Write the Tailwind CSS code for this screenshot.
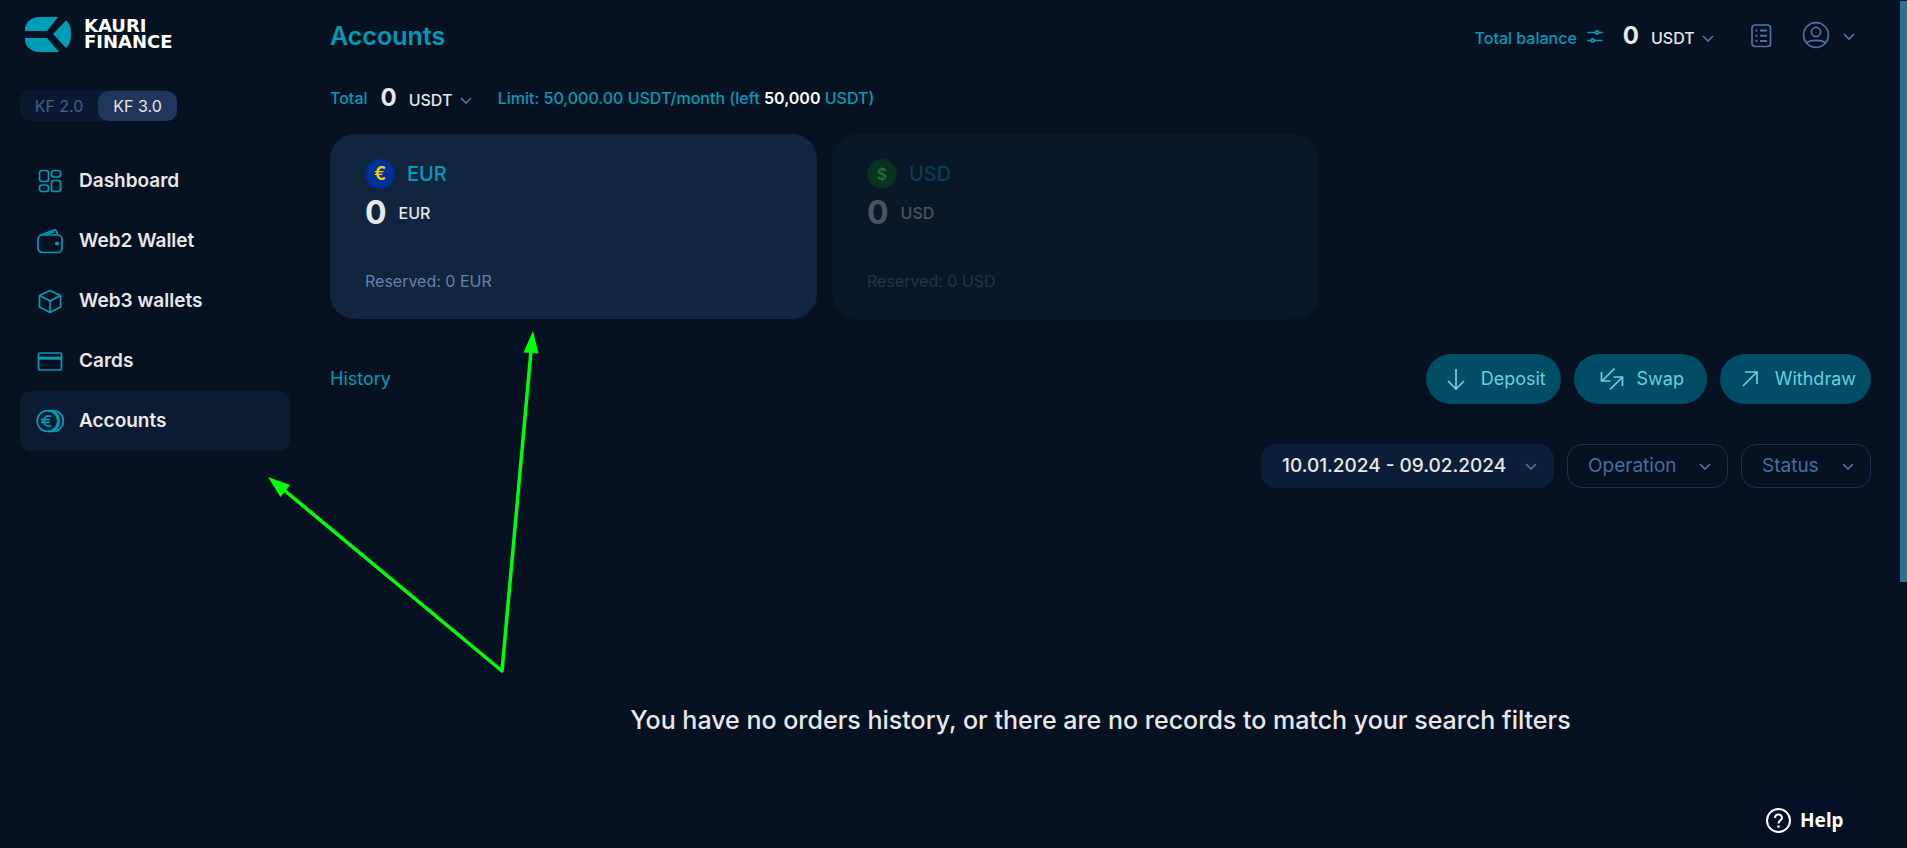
<!DOCTYPE html>
<html lang="en">
<head>
    <meta charset="UTF-8">
    <meta name="viewport" content="width=device-width, initial-scale=1.0">
    <title>Kauri Finance - Accounts</title>
    <script src="https://cdn.jsdelivr.net/npm/@tailwindcss/browser@4"></script>
</head>
<body class="bg-[#061222] text-[#e8e8e8] font-['Inter',sans-serif]">
    <div class="flex min-h-screen">
        <!-- Sidebar -->
        <aside class="w-[290px] shrink-0 pl-5 pt-4">
            <a href="#" class="flex items-center gap-3 pl-[5px] h-9 text-white">
                <svg class="w-[47px] h-9 shrink-0" viewBox="0 0 47 36" fill="#009cb8">
                    <path d="M14 1H33L22 15H0V13C0 6 7 1 14 1Z"/>
                    <path d="M0 22H22L34 36H14C6 36 0 30 0 24Z"/>
                    <path d="M41 4.500C45 8 46 12 46 18C46 24 45 28 41 32L28 18Z"/>
                </svg>
                <span class="flex flex-col font-['DejaVu_Sans',sans-serif] text-[18px] leading-4 font-bold">
                    <span>KAURI</span>
                    <span>FINANCE</span>
                </span>
            </a>
            <div class="mt-[38px] flex h-[31px] w-[157px] items-end rounded-[10px] bg-[#0a1930] text-base">
                <button class="h-[31px] w-[78px] text-[#42608f]">KF 2.0</button>
                <button class="h-[30px] w-[79px] rounded-[10px] bg-[#1f365d] text-[#e8e8e8]">KF 3.0</button>
            </div>
            <nav class="mt-[30px] w-[270px] text-[19px] font-semibold">
                <a href="#" class="flex h-[60px] items-center gap-[14px] rounded-[10px] px-[15px]">
                    <svg class="w-[30px] h-[30px]" viewBox="0 0 30 30" fill="none" stroke="#009cb8" stroke-width="1.700">
                        <rect x="4.500" y="4.500" width="9" height="11" rx="2.500"/>
                        <rect x="16.500" y="4.500" width="9" height="6.500" rx="2.500"/>
                        <rect x="4.500" y="19" width="9" height="6.500" rx="2.500"/>
                        <rect x="16.500" y="14.500" width="9" height="11" rx="2.500"/>
                    </svg>
                    Dashboard
                </a>
                <a href="#" class="flex h-[60px] items-center gap-[14px] rounded-[10px] px-[15px]">
                    <svg class="w-[30px] h-[30px]" viewBox="0 0 30 30" fill="none" stroke="#009cb8" stroke-width="1.700" stroke-linejoin="round">
                        <rect x="3" y="9" width="24" height="17.500" rx="4.500"/>
                        <path d="M4.500 9.500L18.500 4.200C20 3.600 21 4 21.500 5.500L22.800 9"/>
                        <path d="M10 9L19.500 5.500"/>
                        <circle cx="22" cy="17.500" r="1.200" fill="#009cb8"/>
                    </svg>
                    Web2 Wallet
                </a>
                <a href="#" class="flex h-[60px] items-center gap-[14px] rounded-[10px] px-[15px]">
                    <svg class="w-[30px] h-[30px]" viewBox="0 0 30 30" fill="none" stroke="#009cb8" stroke-width="1.700" stroke-linejoin="round">
                        <path d="M15 4.500L25.500 9.500V21L15 26.500L4.500 21V9.500Z"/>
                        <path d="M4.500 9.500L15 15L25.500 9.500M15 15V26.500"/>
                    </svg>
                    Web3 wallets
                </a>
                <a href="#" class="flex h-[60px] items-center gap-[14px] rounded-[10px] px-[15px]">
                    <svg class="w-[30px] h-[30px]" viewBox="0 0 30 30" fill="none" stroke="#009cb8" stroke-width="1.700">
                        <rect x="3.500" y="7" width="23" height="17" rx="1.500"/>
                        <path d="M3.500 12.200H26.500" stroke-width="3"/>
                    </svg>
                    Cards
                </a>
                <a href="#" class="flex h-[60px] items-center gap-[14px] rounded-[10px] bg-[#0b1b32] px-[15px]">
                    <svg class="w-[30px] h-[30px]" viewBox="0 0 30 30" fill="none" stroke="#009cb8" stroke-width="1.700">
                        <circle cx="12.500" cy="15" r="10.300"/>
                        <path d="M13 4.700H18A10.300 10.300 0 0 1 18 25.300H13"/>
                        <path d="M18.500 5C26 10 26 20 18.500 25"/>
                        <path d="M16 10.500C12 9 8.500 11 8.500 15C8.500 19 12 21 16 19.500M6 13.700H14.500M6 16.300H14.500"/>
                    </svg>
                    Accounts
                </a>
            </nav>
        </aside>

        <!-- Main -->
        <main class="flex min-w-0 grow flex-col pl-10 pr-9">
            <header class="flex h-[72px] items-center justify-between">
                <h1 class="text-[25px] leading-8 font-semibold text-[#009cb8]">Accounts</h1>
                <div class="flex items-center pr-4">
                    <div class="flex items-baseline">
                        <span class="text-base font-medium text-[#009cb8]">Total balance</span>
                        <button aria-label="Balance settings" class="ml-2 self-center">
                            <svg class="w-5 h-5" viewBox="0 0 20 20" fill="none" stroke="#009cb8" stroke-width="1.700" stroke-linecap="round">
                                <path d="M3 6.500H10.500M13.500 6.500H17M3 14.500H6M9 14.500H17"/>
                                <circle cx="12" cy="6.500" r="1.600"/>
                                <circle cx="7.500" cy="14.500" r="1.600"/>
                            </svg>
                        </button>
                        <span class="ml-[18px] text-2xl font-bold">0</span>
                        <label class="relative ml-3 flex items-center">
                            <select aria-label="Balance currency" class="w-[63px] appearance-none text-base font-medium outline-none">
                                <option>USDT</option>
                            </select>
                            <svg class="pointer-events-none absolute right-0 w-3 h-3" viewBox="0 0 12 12" fill="none" stroke="#53709f" stroke-width="1.700"><path d="M1 4L6 9L11 4"/></svg>
                        </label>
                    </div>
                    <button aria-label="Reports" class="ml-8">
                        <svg class="w-[30px] h-[30px]" viewBox="0 0 30 30" fill="none" stroke="#53709f" stroke-width="1.700">
                            <rect x="6" y="4" width="18.500" height="21.500" rx="3"/>
                            <path d="M14 9.500H21M14 14.800H21M14 20H21M9.500 9.500H11.500M9.500 14.800H11.500M9.500 20H11.500" stroke-width="1.900"/>
                        </svg>
                    </button>
                    <button aria-label="Profile" class="ml-[25px] flex items-center gap-3">
                        <svg class="w-[30px] h-[30px]" viewBox="0 0 30 30" fill="none" stroke="#53709f" stroke-width="1.700">
                            <circle cx="15" cy="14" r="12.400"/>
                            <circle cx="15" cy="11" r="4.600"/>
                            <path d="M6 22C8 18.500 22 18.500 24 22"/>
                        </svg>
                        <svg class="w-3 h-3" viewBox="0 0 12 12" fill="none" stroke="#53709f" stroke-width="1.700"><path d="M1 4L6 9L11 4"/></svg>
                    </button>
                </div>
            </header>

            <div class="mt-[10px] flex h-8 items-center text-base font-medium text-[#009cb8]">
                <span>Total</span>
                <div class="ml-[13px] flex items-baseline text-[#e8e8e8]">
                    <span class="text-2xl font-bold">0</span>
                    <label class="relative ml-3 flex items-center">
                        <select aria-label="Total currency" class="w-[63px] appearance-none text-base font-medium outline-none">
                            <option>USDT</option>
                        </select>
                        <svg class="pointer-events-none absolute right-0 w-3 h-3" viewBox="0 0 12 12" fill="none" stroke="#53709f" stroke-width="1.700"><path d="M1 4L6 9L11 4"/></svg>
                    </label>
                </div>
                <p class="ml-[26px]">Limit: 50,000.00 USDT/month (left <span class="font-semibold text-white">50,000</span> USDT)</p>
            </div>

            <!-- Currency cards -->
            <section class="mt-5 flex gap-[15px]">
                <div class="h-[185px] w-[487px] rounded-[25px] bg-[#12253f] px-[35px] pt-[25px]">
                    <div class="flex items-center gap-3">
                        <span class="flex h-[30px] w-[30px] items-center justify-center rounded-full border-2 border-[#052b8a] bg-[#003399] text-lg leading-none font-semibold text-[#ffcc00]">€</span>
                        <h2 class="text-xl font-medium text-[#009cb8]">EUR</h2>
                    </div>
                    <p class="mt-1 flex items-center gap-3"><span class="text-[32px] leading-10 font-bold">0</span><span class="text-base font-medium">EUR</span></p>
                    <p class="mt-[36px] text-base text-[#6481b3]">Reserved: 0 EUR</p>
                </div>
                <div class="h-[185px] w-[487px] rounded-[25px] bg-[#091829] px-[35px] pt-[25px]">
                    <div class="flex items-center gap-3">
                        <span class="flex h-[30px] w-[30px] items-center justify-center rounded-full border-2 border-[#08301f] bg-[#06341f] text-base leading-none font-semibold text-[#2c6347]">$</span>
                        <h2 class="text-xl font-medium text-[#063e52]">USD</h2>
                    </div>
                    <p class="mt-1 flex items-center gap-3 text-[#4c545f]"><span class="text-[32px] leading-10 font-bold">0</span><span class="text-base font-medium">USD</span></p>
                    <p class="mt-[36px] text-base text-[#22334e]">Reserved: 0 USD</p>
                </div>
            </section>

            <!-- History -->
            <section class="mt-[35px] flex items-center justify-between">
                <h2 class="text-lg text-[#009cb8]">History</h2>
                <div class="flex gap-[13px] text-lg text-[#6bcfdf]">
                    <button class="flex h-[50px] min-w-[133px] items-center justify-center gap-[10px] rounded-full bg-[#004d66] px-[15px]">
                        <svg class="w-[30px] h-[30px]" viewBox="0 0 30 30" fill="none" stroke="currentColor" stroke-width="1.700"><path d="M15 5V25M7 17L15 25L23 17"/></svg>
                        Deposit
                    </button>
                    <button class="flex h-[50px] min-w-[133px] items-center justify-center gap-[10px] rounded-full bg-[#004d66] px-[15px]">
                        <svg class="w-[30px] h-[30px]" viewBox="0 0 30 30" fill="none" stroke="currentColor" stroke-width="1.700"><path d="M17.500 4.500L5 17M4.500 8V17H13.500M13 25.500L25.500 13M16.500 13H25.500V22"/></svg>
                        Swap
                    </button>
                    <button class="flex h-[50px] min-w-[133px] items-center justify-center gap-[10px] rounded-full bg-[#004d66] px-[15px]">
                        <svg class="w-[30px] h-[30px]" viewBox="0 0 30 30" fill="none" stroke="currentColor" stroke-width="1.700"><path d="M8 22L22 8M10 8H22V20"/></svg>
                        Withdraw
                    </button>
                </div>
            </section>

            <section class="mt-10 flex justify-end gap-[13px] text-[19px]">
                <button class="flex h-11 w-[293px] items-center justify-between rounded-[15px] bg-[#0d1e39] pr-[17px] pl-[21px] font-medium">
                    10.01.2024 - 09.02.2024
                    <svg class="w-3 h-3" viewBox="0 0 12 12" fill="none" stroke="#53709f" stroke-width="1.700"><path d="M1 4L6 9L11 4"/></svg>
                </button>
                <label class="relative flex items-center">
                    <select aria-label="Operation" class="h-11 w-[161px] appearance-none rounded-[15px] border border-[#1b3056] pl-5 text-[#4d6b9c] outline-none">
                        <option>Operation</option>
                    </select>
                    <svg class="pointer-events-none absolute right-[17px] w-3 h-3" viewBox="0 0 12 12" fill="none" stroke="#53709f" stroke-width="1.700"><path d="M1 4L6 9L11 4"/></svg>
                </label>
                <label class="relative flex items-center">
                    <select aria-label="Status" class="h-11 w-[130px] appearance-none rounded-[15px] border border-[#1b3056] pl-5 text-[#4d6b9c] outline-none">
                        <option>Status</option>
                    </select>
                    <svg class="pointer-events-none absolute right-[17px] w-3 h-3" viewBox="0 0 12 12" fill="none" stroke="#53709f" stroke-width="1.700"><path d="M1 4L6 9L11 4"/></svg>
                </label>
            </section>

            <p class="mt-[214px] text-center text-[25px] leading-9 font-medium">You have no orders history, or there are no records to match your search filters</p>
        </main>
    </div>

    <!-- Help widget -->
    <button class="fixed right-[35px] bottom-0 flex h-14 w-[133px] items-center gap-2 rounded-[28px] bg-[#061025] pl-[26px] font-['Noto_Sans',sans-serif] text-[19px] font-bold text-white">
        <svg class="w-[27px] h-[27px]" viewBox="0 0 27 27" fill="none" stroke="#fff" stroke-width="2">
            <circle cx="13.500" cy="13.500" r="11.500"/>
            <path d="M10 11C10 6.500 17 6.500 17 10.800C17 13.500 13.500 13.300 13.500 16.500"/>
            <path d="M13.500 18.500V20.700" stroke-width="2.400"/>
        </svg>
        Help
    </button>

    <!-- Scrollbar thumb -->
    <div class="fixed top-px right-0 h-[581px] w-[7px] bg-[#28768c]"></div>

    <!-- Pointer arrows -->
    <svg class="pointer-events-none absolute top-[331px] left-[268px] h-[345px] w-[275px]" viewBox="0 0 275 345" fill="#00ff0a">
        <path d="M16 159L234 340L263 20" fill="none" stroke="#00ff0a" stroke-width="3.500" stroke-linejoin="round"/>
        <path d="M0 146L22 154L12.500 166Z"/>
        <path d="M265 0L270.500 22.500L255.500 21.500Z"/>
    </svg>
</body>
</html>
